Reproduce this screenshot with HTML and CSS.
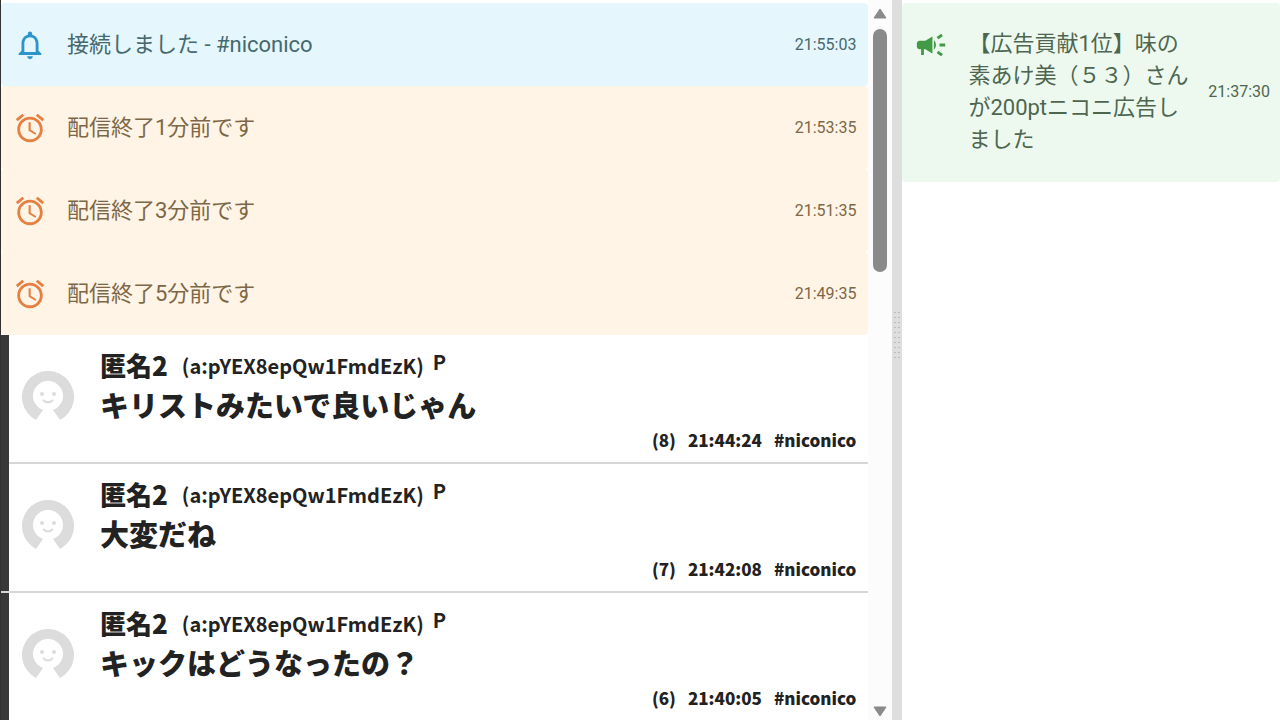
FILE: index.html
```html
<!DOCTYPE html>
<html lang="ja">
<head>
    <meta charset="UTF-8">
    <meta name="viewport" content="width=device-width, initial-scale=1.0">
    <title>コメントビューア</title>
    <link rel="stylesheet" href="styles.css">
</head>
<body>

    <!-- shared icons -->
    <svg class="icon-defs" aria-hidden="true">
        <symbol id="icon-bell" viewBox="0 0 24 24">
            <path d="M12 22c1.1 0 2-.9 2-2h-4c0 1.1.9 2 2 2zm6-6v-5c0-3.07-1.63-5.64-4.5-6.32V4c0-.83-.67-1.5-1.5-1.5s-1.5.67-1.5 1.5v.68C7.64 5.36 6 7.92 6 11v5l-2 2v1h16v-1l-2-2zm-2 1H8v-6c0-2.48 1.51-4.5 4-4.5s4 2.02 4 4.5v6z"/>
        </symbol>
        <symbol id="icon-alarm" viewBox="0 0 24 24">
            <path d="M22 5.72l-4.6-3.86-1.29 1.53 4.6 3.86L22 5.72zM7.88 3.39L6.6 1.86 2 5.71l1.29 1.53 4.59-3.85zM12.5 8H11v6l4.75 2.85.75-1.23-4-2.37V8zM12 4c-4.97 0-9 4.03-9 9s4.02 9 9 9c4.97 0 9-4.03 9-9s-4.03-9-9-9zm0 16c-3.87 0-7-3.13-7-7s3.13-7 7-7 7 3.13 7 7-3.13 7-7 7z"/>
        </symbol>
        <symbol id="icon-campaign" viewBox="0 0 24 24">
            <path d="M18 11v2h4v-2h-4zM16 17.61c.96.71 2.21 1.65 3.2 2.39.4-.53.8-1.07 1.2-1.6-.99-.74-2.24-1.68-3.2-2.4-.4.54-.8 1.08-1.2 1.61zM20.4 5.6c-.4-.53-.8-1.07-1.2-1.6-.99.74-2.24 1.68-3.2 2.4.4.53.8 1.07 1.2 1.6.96-.72 2.21-1.65 3.2-2.4zM4 9c-1.1 0-2 .9-2 2v2c0 1.1.9 2 2 2h1v4h2v-4h1l5 3V6L8 9H4zM15.5 12c0-1.33-.58-2.53-1.5-3.35v6.69c.92-.81 1.5-2.01 1.5-3.34z"/>
        </symbol>
        <symbol id="icon-user" viewBox="0 0 52 52">
            <path fill="#dcdcdc" d="M14 49A26 26 0 1 1 38 49L31 39A15 15 0 1 0 21 39Z"/>
            <circle fill="#dcdcdc" cx="20" cy="23" r="2"/>
            <circle fill="#dcdcdc" cx="32" cy="23" r="2"/>
            <path fill="none" stroke="#dcdcdc" stroke-width="2" d="M21 29Q26 34 31 29"/>
        </symbol>
    </svg>

    <main class="app">
        <section class="comments">
            <div class="alert alert-info">
                <svg class="alert-icon"><use href="#icon-bell"/></svg>
                <p class="alert-text">接続しました - #niconico</p>
                <time class="alert-time">21:55:03</time>
            </div>
            <div class="alert alert-warning">
                <svg class="alert-icon"><use href="#icon-alarm"/></svg>
                <p class="alert-text">配信終了1分前です</p>
                <time class="alert-time">21:53:35</time>
            </div>
            <div class="alert alert-warning">
                <svg class="alert-icon"><use href="#icon-alarm"/></svg>
                <p class="alert-text">配信終了3分前です</p>
                <time class="alert-time">21:51:35</time>
            </div>
            <div class="alert alert-warning">
                <svg class="alert-icon"><use href="#icon-alarm"/></svg>
                <p class="alert-text">配信終了5分前です</p>
                <time class="alert-time">21:49:35</time>
            </div>

            <article class="comment comment-joined">
                <svg class="avatar"><use href="#icon-user"/></svg>
                <div class="comment-body">
                    <div class="comment-head">
                        <span class="user-name">匿名2</span>
                        <span class="user-id">(a:pYEX8epQw1FmdEzK)</span>
                        <span class="user-mark">P</span>
                    </div>
                    <p class="comment-text">キリストみたいで良いじゃん</p>
                    <div class="comment-meta"><span>(8)</span><time>21:44:24</time><span>#niconico</span></div>
                </div>
            </article>
            <article class="comment">
                <svg class="avatar"><use href="#icon-user"/></svg>
                <div class="comment-body">
                    <div class="comment-head">
                        <span class="user-name">匿名2</span>
                        <span class="user-id">(a:pYEX8epQw1FmdEzK)</span>
                        <span class="user-mark">P</span>
                    </div>
                    <p class="comment-text">大変だね</p>
                    <div class="comment-meta"><span>(7)</span><time>21:42:08</time><span>#niconico</span></div>
                </div>
            </article>
            <article class="comment">
                <svg class="avatar"><use href="#icon-user"/></svg>
                <div class="comment-body">
                    <div class="comment-head">
                        <span class="user-name">匿名2</span>
                        <span class="user-id">(a:pYEX8epQw1FmdEzK)</span>
                        <span class="user-mark">P</span>
                    </div>
                    <p class="comment-text">キックはどうなったの？</p>
                    <div class="comment-meta"><span>(6)</span><time>21:40:05</time><span>#niconico</span></div>
                </div>
            </article>
        </section>

        <div class="scrollbar">
            <svg class="scroll-arrow" viewBox="0 0 14 12"><path d="M7 1L13 10H1Z"/></svg>
            <div class="scroll-track"><div class="scroll-thumb"></div></div>
            <svg class="scroll-arrow" viewBox="0 0 14 12"><path d="M1 2H13L7 11Z"/></svg>
        </div>

        <div class="splitter"><div class="splitter-grip"></div></div>

        <aside class="notices">
            <div class="alert alert-success">
                <svg class="alert-icon"><use href="#icon-campaign"/></svg>
                <p class="alert-text">【広告貢献1位】味の素あけ美（５３）さんが200ptニコニ広告しました</p>
                <time class="alert-time">21:37:30</time>
            </div>
        </aside>
    </main>

</body>
</html>
```
FILE: styles.css
```css
* {
    margin: 0;
    padding: 0;
    box-sizing: border-box;
}
body {
    background-color: white;
    color: #222;
    font-family: Roboto, "Noto Sans CJK JP", sans-serif;
}
.icon-defs {
    display: none;
}
.app {
    display: flex;
    height: 100vh;
    overflow: hidden;
}

/* left pane */
.comments {
    flex: 1;
    min-width: 0;
    padding-top: 3px;
    border-left: 1px solid #333;
    overflow: hidden;
}

/* alerts */
.alert {
    display: flex;
    align-items: center;
    padding: 25px 12px 24px 12px;
    border-radius: 4px;
}
.alert-icon {
    width: 34px;
    height: 34px;
    margin-right: 20px;
    flex-shrink: 0;
    align-self: flex-start;
    fill: currentColor;
}
.alert-text {
    flex: 1;
    font-size: 22px;
    line-height: 32px;
}
.alert-time {
    margin-left: 10px;
    font-size: 16px;
    line-height: 32px;
}
.alert-info {
    background-color: #e5f6fd;
    color: #45696f;
}
.alert-info .alert-icon {
    color: #2d94cc;
}
.alert-warning {
    background-color: #fff4e5;
    color: #7d6746;
}
.alert-warning .alert-icon {
    color: #e57f42;
}
.alert-success {
    background-color: #edf9ef;
    color: #4e6650;
}
.alert-success .alert-icon {
    color: #439a46;
}

/* comment rows */
.comment {
    display: flex;
    align-items: flex-start;
    padding: 11px 12px 6px 21px;
    border-bottom: 2px solid #d6d6d6;
    background: linear-gradient(to right, #383838 8px, transparent 8px);
    font-family: "Noto Sans CJK JP", sans-serif;
    font-weight: 900;
}
/* the dark strip runs on into the next row */
.comment-joined {
    border-bottom-color: transparent;
    background:
        linear-gradient(to right, #383838 8px, transparent 8px) border-box,
        linear-gradient(#d6d6d6, #d6d6d6) bottom / 100% 2px no-repeat border-box;
}
.avatar {
    width: 52px;
    height: 52px;
    margin: 25px 26px 0 0;
    flex-shrink: 0;
}
.comment-body {
    flex: 1;
    min-width: 0;
}
.comment-head {
    display: flex;
    align-items: center;
    height: 38px;
}
.user-name {
    font-size: 26px;
    line-height: 38px;
}
.user-id {
    font-size: 20px;
    font-weight: 700;
    margin-left: 14px;
}
.user-mark {
    font-size: 20px;
    font-weight: 700;
    margin: 0 0 8px 9px;
}
.comment-text {
    font-size: 29px;
    line-height: 40px;
}
.comment-meta {
    display: flex;
    justify-content: flex-end;
    gap: 12px;
    font-size: 17px;
    line-height: 32px;
}

/* scrollbar */
.scrollbar {
    display: flex;
    flex-direction: column;
    align-items: center;
    width: 24px;
    padding: 8px 0 3px;
    background-color: #fcfcfc;
}
.scroll-arrow {
    width: 14px;
    height: 12px;
    fill: #8a8a8a;
    stroke: #8a8a8a;
    stroke-linejoin: round;
}
.scroll-track {
    flex: 1;
    width: 14px;
    padding: 9px 0;
}
.scroll-thumb {
    height: 36.5%;
    border-radius: 7px;
    background-color: #8a8a8a;
}

/* splitter */
.splitter {
    display: flex;
    align-items: center;
    justify-content: center;
    width: 10px;
    background-color: #dedede;
}
.splitter-grip {
    width: 8px;
    height: 50px;
    margin-bottom: 50px;
    background-image: radial-gradient(circle, #bbb 1px, transparent 1px);
    background-size: 4px 5px;
}

/* right pane */
.notices {
    width: 29.5%;
    padding-top: 3px;
}
.notices .alert {
    padding-right: 10px;
    padding-bottom: 26px;
}
```
